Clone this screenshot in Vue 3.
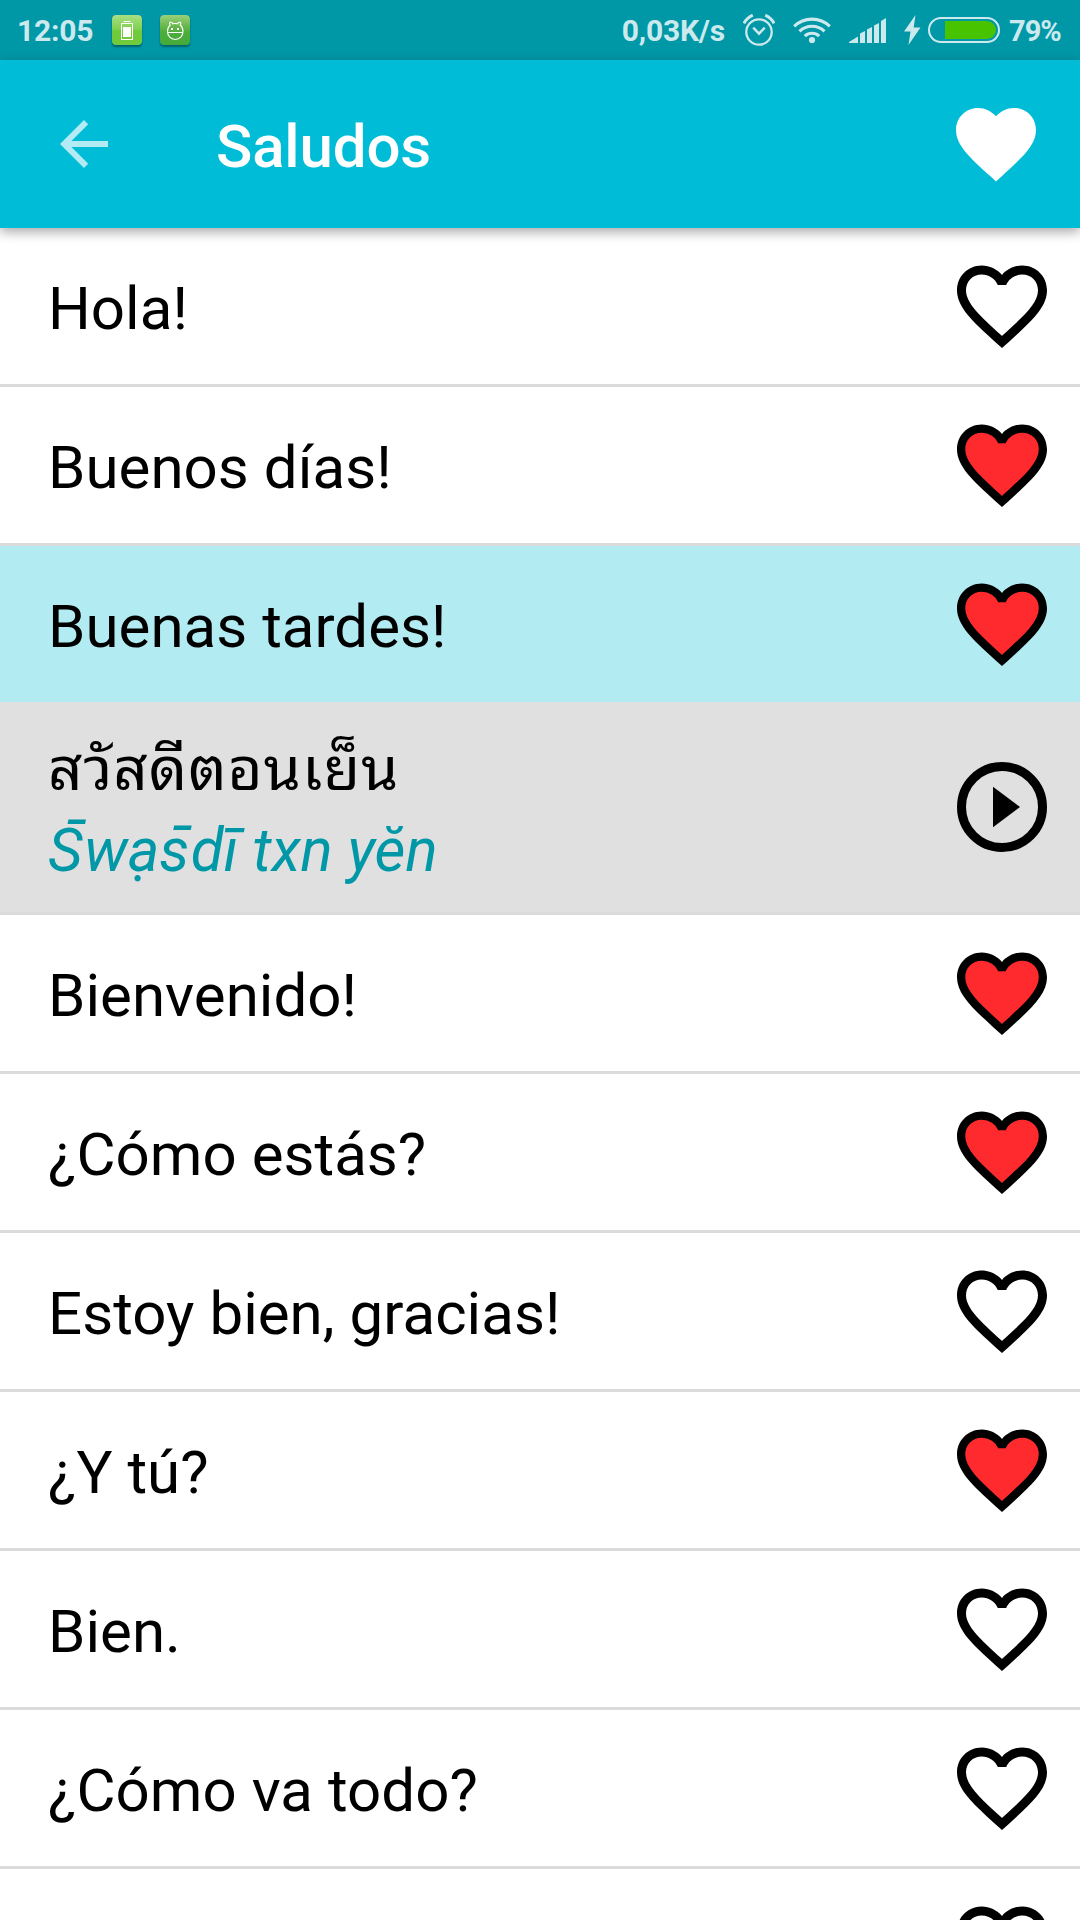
<template>
  <div class="screen">
    <div class="status-bar">
      <span class="clock">12:05</span>
      <svg class="app-icon" width="30" height="30" viewBox="0 0 30 30">
        <defs>
          <linearGradient id="batteryBg" x1="0" y1="0" x2="0" y2="1">
            <stop offset="0" stop-color="#a9df83" />
            <stop offset="0.5" stop-color="#7dcf4e" />
            <stop offset="0.52" stop-color="#70cb3c" />
            <stop offset="1" stop-color="#70cb3c" />
          </linearGradient>
        </defs>
        <rect width="30" height="30" rx="3.5" fill="url(#batteryBg)" />
        <path d="M11.5 6.5h7" stroke="#fff" stroke-width="1" />
        <rect x="9.5" y="8.5" width="11" height="16" fill="none" stroke="#fff" stroke-width="1" />
        <rect x="11" y="12" width="8" height="10" fill="#fff" />
      </svg>
      <svg class="app-icon second" width="30" height="30" viewBox="0 0 30 30">
        <defs>
          <linearGradient id="droidBg" x1="0" y1="0" x2="0" y2="1">
            <stop offset="0" stop-color="#9bd07a" />
            <stop offset="0.45" stop-color="#5db344" />
            <stop offset="0.6" stop-color="#4bae3a" />
            <stop offset="1" stop-color="#44aa3b" />
          </linearGradient>
        </defs>
        <rect width="30" height="30" rx="3.5" fill="url(#droidBg)" />
        <g fill="none" stroke="#fff" stroke-width="1.1">
          <path d="M7.500 16.500c0-3 1-5 2.700-6.500C9 8.500 9.700 7 11 7.200c1 .1 1.600.7 1.700 1.600 1.500-.4 3.500-.4 5 0 .1-.9.7-1.500 1.700-1.600 1.300-.2 2 1.300.8 2.800 1.800 1.500 2.800 3.500 2.800 6.500 0 4.500-3.300 8-7.800 8s-7.700-3.500-7.700-8z" />
          <path d="M7.500 17.500h15.500" />
        </g>
        <rect x="11" y="13" width="2" height="2" fill="#fff" />
        <rect x="17" y="13" width="2" height="2" fill="#fff" />
      </svg>

      <div class="indicators">
        <span class="speed">0,03K/s</span>
        <svg class="alarm" width="32" height="32" viewBox="0 0 32 32" fill="none" stroke="#cceaed">
          <circle cx="16" cy="18" r="12.700" stroke-width="2.300" />
          <path d="M10.200 13.700l5.800 6 5.800-6" stroke-width="2.400" />
          <path d="M1 9.500Q3.500 4 9.800 1.200M31 9.500Q28.500 4 22.200 1.200" stroke-width="3" />
        </svg>
        <svg class="wifi" width="38" height="28" viewBox="0 0 38 28" fill="none" stroke="#cceaed" stroke-width="3.200">
          <path d="M1.200 10.300a25.500 25.500 0 0 1 35.600 0" />
          <path d="M6.500 15.300a18 18 0 0 1 25 0" />
          <path d="M11.800 20.100a10.500 10.500 0 0 1 14.400 0" />
          <circle cx="19" cy="24" r="3.100" fill="#cceaed" stroke="none" />
        </svg>
        <svg class="signal" width="37" height="25" viewBox="0 0 37 25" fill="#cceaed">
          <path d="M0 25v-1l9-5.500V25z" />
          <path d="M11 25v-9.500l5-2.500v12z" />
          <path d="M18 25V11.500L23 9v16z" />
          <path d="M25 25V7.500L30 5v20z" />
          <path d="M32 25V3l5-3v25z" />
        </svg>
        <svg class="bolt" width="17" height="30" viewBox="0 0 17 30" fill="#cceaed">
          <path d="M11.500 0L0 16.500h6.500L4.500 30 16.500 12.500H9.700z" />
        </svg>
        <svg class="battery" width="72" height="26" viewBox="0 0 72 26">
          <rect x="1" y="1" width="70" height="24" rx="12" fill="none" stroke="#cceaed" stroke-width="2" />
          <path d="M17 4h42a9 9 0 0 1 0 18H17z" fill="#47c300" />
        </svg>
        <span class="percent">79%</span>
      </div>
    </div>

    <header class="app-bar">
      <svg class="back" width="72" height="72" viewBox="0 0 24 24" fill="#b2ebf3">
        <path d="M20 11H7.830l5.590-5.590L12 4l-8 8 8 8 1.410-1.410L7.830 13H20v-2z" />
      </svg>
      <h1 class="title">Saludos</h1>
      <svg class="favorites" width="96" height="96" viewBox="0 0 24 24" fill="#fff">
        <path :d="heart" />
      </svg>
    </header>

    <div class="list">
      <template v-for="phrase in phrases" :key="phrase.text">
        <div class="row" :class="{ selected: phrase.translation }">
          <span class="phrase">{{ phrase.text }}</span>
          <svg class="row-icon" width="108" height="108" viewBox="0 0 24 24">
            <path :d="heart + heartInner" fill-rule="evenodd" />
            <path v-if="phrase.favorite" :d="heartInner" fill="#ff2a2e" stroke="#ff2a2e" stroke-width="0.35" />
          </svg>
        </div>
        <div v-if="phrase.translation" class="row detail">
          <div class="translation">
            <span class="thai">{{ phrase.translation }}</span>
            <span class="romanized"><span
              v-for="(part, i) in splitMarks(phrase.romanized)"
              :key="i"
              :class="{ mark: part === MACRON, upper: i === 1 }"
            >{{ part }}</span></span>
          </div>
          <svg class="row-icon" width="108" height="108" viewBox="0 0 24 24">
            <circle cx="12" cy="12" r="9" fill="none" stroke="#000" stroke-width="2" />
            <path d="M10 16.500l6-4.500-6-4.500z" />
          </svg>
        </div>
      </template>
    </div>
  </div>
</template>

<script setup>
import { ref } from 'vue'

// heart outline and its inner cut-out, 24x24 grid
const heart = 'M12 21.350l-1.450-1.320C5.400 15.360 2 12.280 2 8.500 2 5.420 4.420 3 7.500 3c1.740 0 3.410.81 4.500 2.090C13.090 3.810 14.760 3 16.500 3 19.580 3 22 5.420 22 8.500c0 3.780-3.400 6.860-8.550 11.540z'
const heartInner = 'M12.100 18.550l-.1.1-.1-.1C7.140 14.240 4 11.390 4 8.500 4 6.500 5.500 5 7.500 5c1.540 0 3.040.99 3.570 2.360h1.870C13.460 5.990 14.960 5 16.500 5c2 0 3.500 1.500 3.500 3.500 0 2.890-3.140 5.740-7.900 10.050z'

const MACRON = '\u0304'

const phrases = ref([
  { text: 'Hola!', favorite: false },
  { text: 'Buenos días!', favorite: true },
  {
    text: 'Buenas tardes!',
    favorite: true,
    translation: 'สวัสดีตอนเย็น',
    romanized: 'S\u0304w\u1ea1s\u0304d\u012b txn y\u0115n'
  },
  { text: 'Bienvenido!', favorite: true },
  { text: '¿Cómo estás?', favorite: true },
  { text: 'Estoy bien, gracias!', favorite: false },
  { text: '¿Y tú?', favorite: true },
  { text: 'Bien.', favorite: false },
  { text: '¿Cómo va todo?', favorite: false },
  { text: '', favorite: false }
])

// Roboto has no combining macron, so it gets its own font
function splitMarks(text) {
  return text.split(/(\u0304)/)
}
</script>

<style>
body {
  margin: 0;
}
</style>

<style scoped>
.screen {
  width: 1080px;
  height: 1920px;
  display: flex;
  flex-direction: column;
  overflow: hidden;
  background: #fff;
  color: #000;
  font-family: Roboto, "Noto Sans", sans-serif;
}

svg {
  display: block;
  flex-shrink: 0;
}

/* Status bar */
.status-bar {
  height: 60px;
  flex-shrink: 0;
  box-sizing: border-box;
  display: flex;
  align-items: center;
  padding: 0 18px 0 17px;
  background: #0097a7;
  color: #cceaed;
  font-size: 30px;
  font-weight: 700;
  line-height: 60px;
}

.clock {
  width: 95px;
  padding-top: 1px;
  letter-spacing: -0.2px;
}

.app-icon {
  border-radius: 4px;
  box-shadow: 0 2px 2px rgba(0, 0, 0, 0.35);
}

.app-icon.second {
  margin-left: 18px;
}

.indicators {
  margin-left: auto;
  display: flex;
  align-items: center;
}

.speed,
.percent {
  padding-top: 1px;
}

.speed {
  letter-spacing: -0.2px;
}

.alarm {
  margin-left: 18px;
}

.wifi {
  margin-left: 18px;
}

.signal {
  margin-left: 18px;
}

.bolt {
  margin-left: 18px;
}

.battery {
  margin-left: 7px;
}

.percent {
  width: 53px;
  margin-left: 9px;
  font-size: 29px;
  letter-spacing: -1px;
}

/* App bar */
.app-bar {
  position: relative;
  height: 168px;
  flex-shrink: 0;
  box-sizing: border-box;
  display: flex;
  align-items: center;
  padding: 0 36px 0 48px;
  background: #00bcd7;
  box-shadow: 0 4px 11px rgba(0, 0, 0, 0.34);
  z-index: 1;
}

.title {
  flex: 1;
  margin: 0 0 0 96px;
  padding-top: 5px;
  color: #fff;
  font-size: 60px;
  font-weight: 500;
  letter-spacing: -0.15px;
}

/* Phrase list */
.row {
  height: 159px;
  box-sizing: border-box;
  display: flex;
  align-items: center;
  justify-content: space-between;
  padding: 0 24px 0 48px;
  border-bottom: 3px solid #dbdbdb;
  font-size: 60px;
}

.phrase {
  padding-top: 4px;
  letter-spacing: 0.04px;
}

.row.selected {
  height: 156px;
  border-bottom: none;
  background: #b2ebf2;
}

.row.detail {
  height: 213px;
  background: #e0e0e0;
}

.translation {
  display: flex;
  flex-direction: column;
  padding-top: 6px;
  line-height: 81px;
}

.thai {
  height: 81px;
  font-family: Roboto, "Noto Sans Thai Looped", "Noto Looped Thai", Loma, Garuda, Waree, "Noto Serif Thai", sans-serif;
  letter-spacing: 1px;
}

.romanized {
  height: 81px;
  color: #0097a7;
  font-style: italic;
  white-space: pre;
}

.mark {
  position: relative;
  top: 0;
  font-family: "DejaVu Sans", sans-serif;
  line-height: 0;
  letter-spacing: 1.3px;
}

/* sits above a capital */
.mark.upper {
  top: -6px;
  left: 1px;
}
</style>
